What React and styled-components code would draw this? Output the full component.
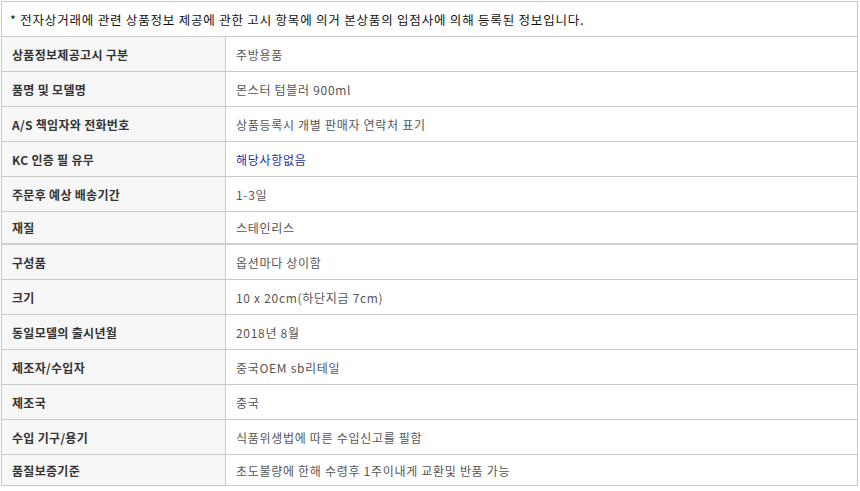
import React from 'react'
import styled, { createGlobalStyle } from 'styled-components'

const GlobalStyle = createGlobalStyle`
  html, body {
    margin: 0;
    padding: 0;
    background: #fff;
  }
  body {
    font-family: "Noto Sans CJK KR", "Noto Sans", sans-serif;
    font-size: 12px;
  }
`

const rows = [
  { label: '상품정보제공고시 구분', value: '주방용품' },
  { label: '품명 및 모델명', value: '몬스터 텀블러 900ml' },
  { label: 'A/S 책임자와 전화번호', value: '상품등록시 개별 판매자 연락처 표기' },
  { label: 'KC 인증 필 유무', value: '해당사항없음', link: true },
  { label: '주문후 예상 배송기간', value: '1-3일' },
  { label: '재질', value: '스테인리스', h: 31, thick: true },
  { label: '구성품', value: '옵션마다 상이함' },
  { label: '크기', value: '10 x 20cm(하단지금 7cm)' },
  { label: '동일모델의 출시년월', value: '2018년 8월' },
  { label: '제조자/수입자', value: '중국OEM sb리테일' },
  { label: '제조국', value: '중국' },
  { label: '수입 기구/용기', value: '식품위생법에 따른 수입신고를 필함' },
  { label: '품질보증기준', value: '초도불량에 한해 수령후 1주이내게 교환및 반품 가능', h: 30, last: true },
]

const App = () => {
  return (
    <Page>
      <GlobalStyle />
      <InfoTable>
        <Notice>* 전자상거래에 관련 상품정보 제공에 관한 고시 항목에 의거 본상품의 입점사에 의해 등록된 정보입니다.</Notice>
        {rows.map((r) => (
          <Row key={r.label} $h={r.h || 34} $thick={r.thick} $last={r.last}>
            <Label>{r.label}</Label>
            <Value $link={r.link}>{r.value}</Value>
          </Row>
        ))}
      </InfoTable>
    </Page>
  )
}

export default App

const Page = styled.div`
  padding: 1px 0 0 1px;
`

const InfoTable = styled.div`
  width: 857px;
  box-sizing: border-box;
  border: 1px solid #c9c9c9;
  display: flex;
  flex-direction: column;
`

const Notice = styled.div`
  height: 34px;
  border-bottom: 1px solid #c9c9c9;
  display: flex;
  align-items: center;
  padding-left: 8px;
  color: #111;
  font-size: 12.5px;
  letter-spacing: 0.8px;
`

const Row = styled.div`
  display: grid;
  grid-template-columns: 224px 1fr;
  height: ${(p) => p.$h}px;
  border-bottom: ${(p) => (p.$last ? 'none' : p.$thick ? '2px solid #d0d0d0' : '1px solid #c9c9c9')};
`

const Label = styled.div`
  background: #f7f7f7;
  border-right: 1px solid #c9c9c9;
  display: flex;
  align-items: center;
  padding-left: 10px;
  font-weight: bold;
  color: #333;
  letter-spacing: 0.3px;
`

const Value = styled.div`
  display: flex;
  align-items: center;
  padding-left: 10px;
  color: ${(p) => (p.$link ? '#1c2fa8' : '#555')};
  letter-spacing: 0.7px;
`
